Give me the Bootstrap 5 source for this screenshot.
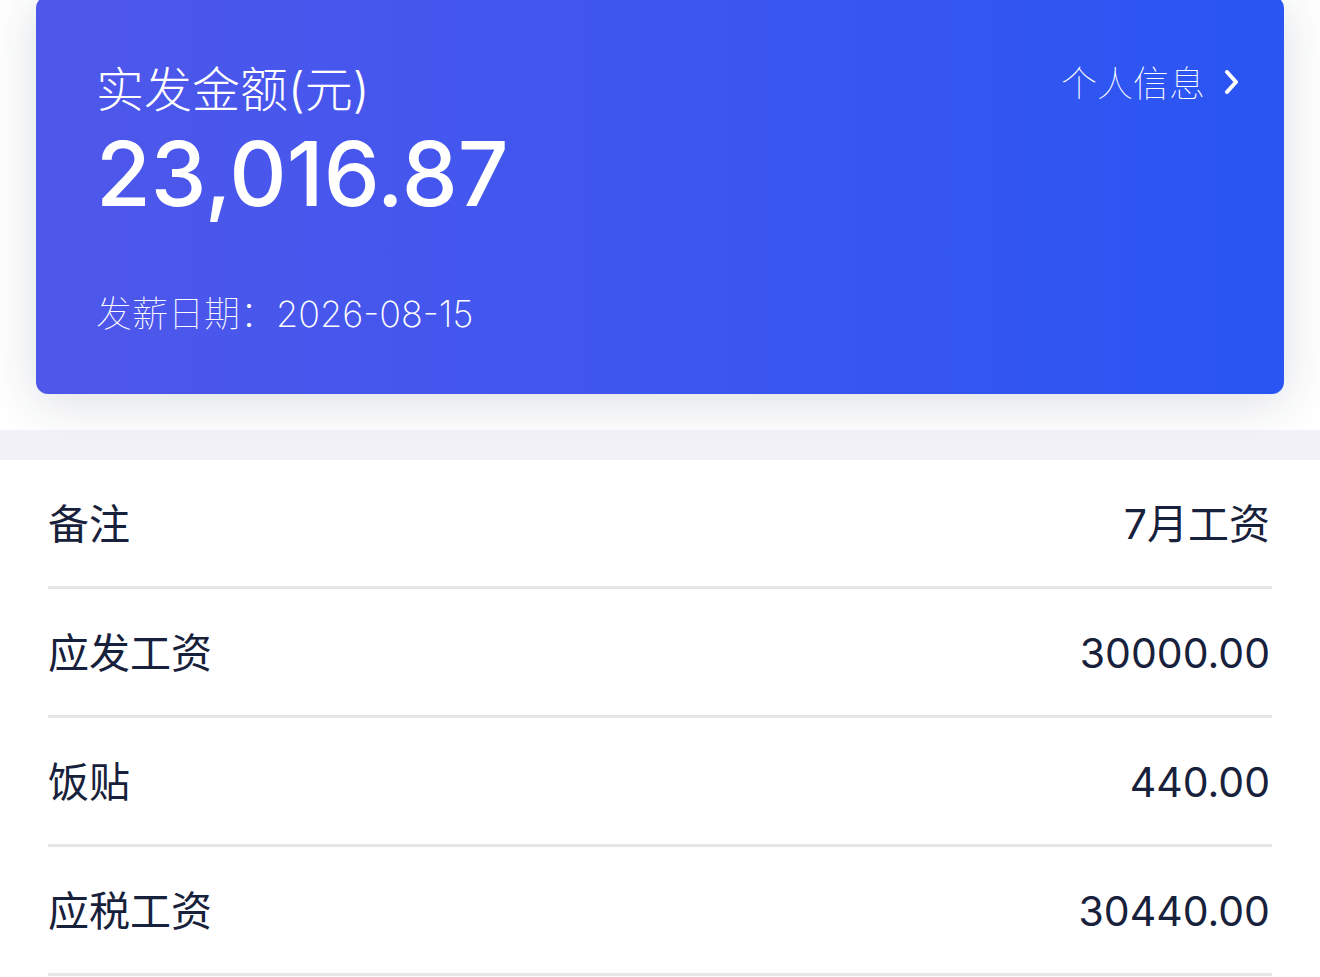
<!DOCTYPE html>
<html lang="zh-CN">
<head>
<meta charset="utf-8">
<meta name="viewport" content="width=device-width, initial-scale=1">
<title>工资条</title>
<link href="https://cdn.jsdelivr.net/npm/bootstrap@5.3.0/dist/css/bootstrap.min.css" rel="stylesheet">
<style>
body{font-family:Inter,"Noto Sans CJK SC",sans-serif;color:#18213b;background:#fff;overflow-x:hidden}
.summary{padding:0 36px 36px}
.pay-card{background:linear-gradient(90deg,#4f57ea,#3e56ef 50%,#2955f3);border-radius:12px;margin-top:-4px;padding:64px 43px 56px 60px;box-shadow:0 8px 50px rgba(30,45,70,.16);color:#fff}
.pay-label{font-size:48px;line-height:60px;font-weight:300}
.amount{font-size:89px;line-height:108px;font-weight:500}
.pay-date{font-size:36px;line-height:48px;font-weight:100;margin-top:62px}
.pay-date time{font-weight:200}
.info-link{font-size:36px;line-height:48px;font-weight:100;color:#fff}
.band{height:30px;background:rgba(236,235,245,.7)}
.lines{padding:0 48px;background:#fff;position:relative}
.lines th,.lines td{font-size:41px;line-height:60px;font-weight:400;padding:34px 0 32px;border-bottom:3px solid #e6e6e6}
.lines td{padding-right:2px}
</style>
</head>
<body>
<header class="summary">
<section class="pay-card">
<div class="d-flex justify-content-between align-items-start">
<div class="pay-label">实发金额(元)</div>
<a href="#" class="info-link d-flex align-items-center text-decoration-none">个人信息
<svg class="ms-3" width="20" height="28" viewBox="0 0 20 28" fill="none" stroke="#fff" stroke-width="4" stroke-linecap="round" stroke-linejoin="round" aria-hidden="true"><path d="M6 2l9 10L6 22"/></svg></a>
</div>
<div class="amount">23,016.87</div>
<div class="pay-date">发薪日期：<time datetime="2026-08-15">2026-08-15</time></div>
</section>
</header>
<div class="band"></div>
<main class="lines">
<table class="w-100">
<tbody>
<tr><th scope="row">备注</th><td class="text-end">7月工资</td></tr>
<tr><th scope="row">应发工资</th><td class="text-end">30000.00</td></tr>
<tr><th scope="row">饭贴</th><td class="text-end">440.00</td></tr>
<tr><th scope="row">应税工资</th><td class="text-end">30440.00</td></tr>
</tbody>
</table>
</main>
<script src="https://cdn.jsdelivr.net/npm/bootstrap@5.3.0/dist/js/bootstrap.bundle.min.js"></script>
</body>
</html>
